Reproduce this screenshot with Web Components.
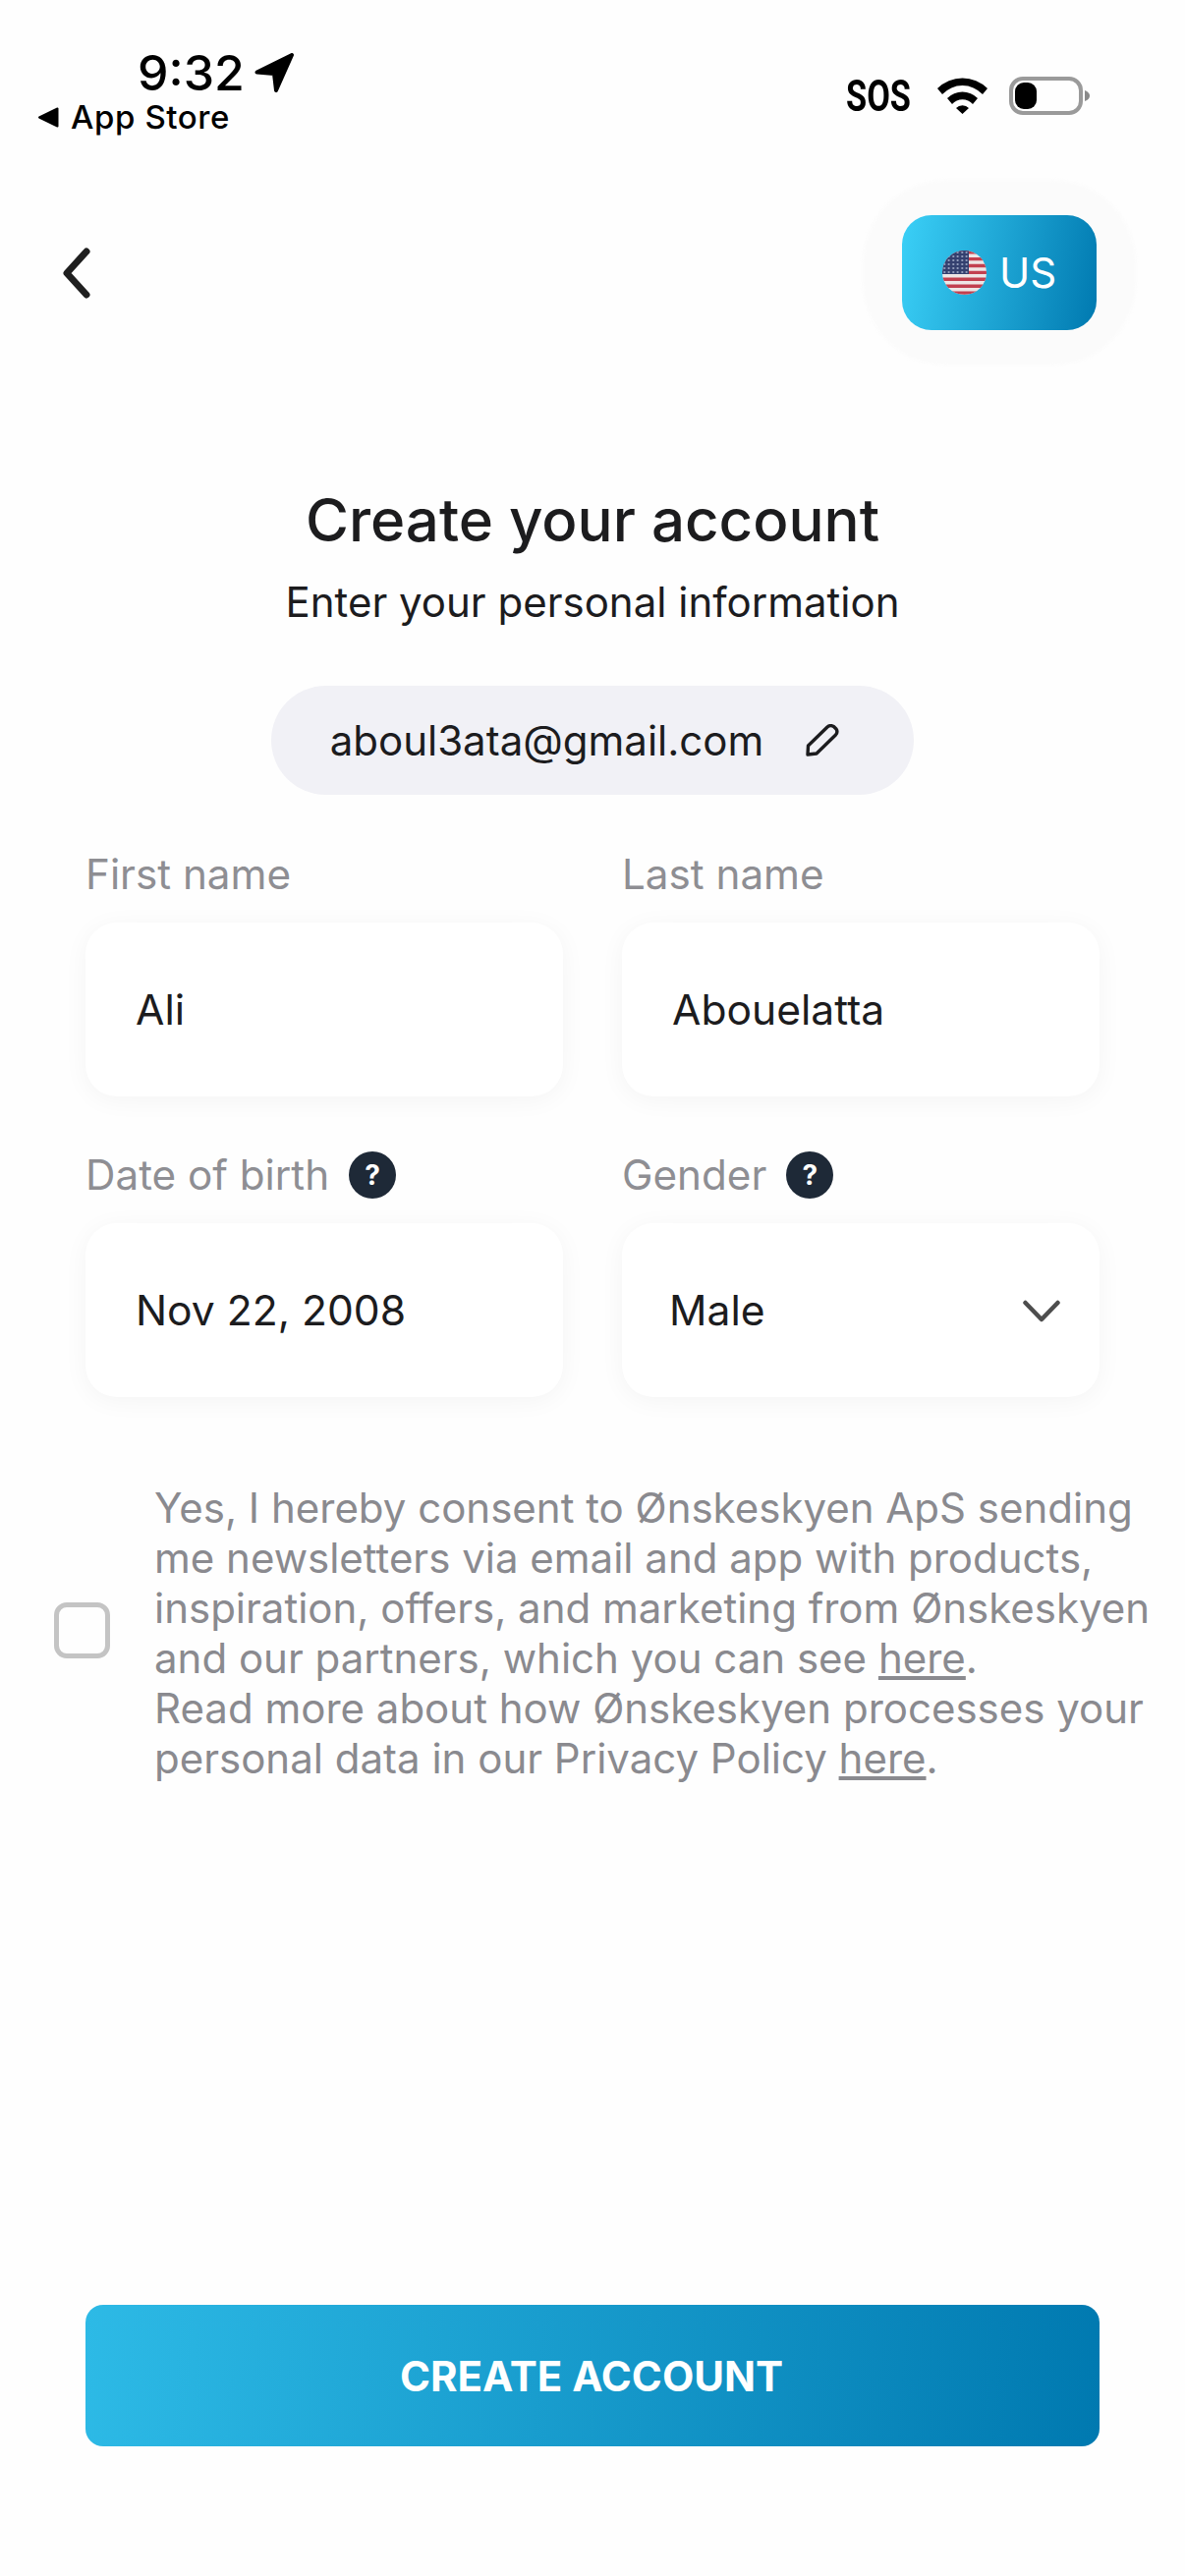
<!DOCTYPE html>
<html lang="en">
<head>
<meta charset="utf-8">
<title>Create your account</title>
<style>
  html, body { margin: 0; padding: 0; background: #fefefe; }
  body { font-family: Inter, "Liberation Sans", sans-serif; color: #1c1c1e; }
</style>
</head>
<body>
<account-screen>
  <status-bar time="9:32" back-label="App Store"></status-bar>
  <top-nav region="US"></top-nav>
  <form-heading title="Create your account" subtitle="Enter your personal information"></form-heading>
  <email-pill>aboul3ata@gmail.com</email-pill>
  <field-grid>
    <form-field label="First name">Ali</form-field>
    <form-field label="Last name">Abouelatta</form-field>
    <form-field label="Date of birth" help>Nov 22, 2008</form-field>
    <form-field label="Gender" help select>Male</form-field>
  </field-grid>
  <consent-row>
    Yes, I hereby consent to Ønskeskyen ApS sending<br>
    me newsletters via email and app with products,<br>
    inspiration, offers, and marketing from Ønskeskyen<br>
    and our partners, which you can see <u>here</u>.<br>
    Read more about how Ønskeskyen processes your<br>
    personal data in our Privacy Policy <u>here</u>.
  </consent-row>
  <primary-button>CREATE ACCOUNT</primary-button>
</account-screen>

<script>
class AccountScreen extends HTMLElement {
  constructor() {
    super();
    this.root = this.attachShadow({mode: 'open'});
    this.root.innerHTML = `
      <style>
        :host { display: flex; flex-direction: column; height: 2622px; box-sizing: border-box; padding-bottom: 132px; overflow: hidden; }
      </style>
      <slot></slot>`;
  }
}
customElements.define('account-screen', AccountScreen);

class StatusBar extends HTMLElement {
  constructor() {
    super();
    this.root = this.attachShadow({mode: 'open'});
    this.root.innerHTML = `
      <style>
        :host { display: flex; justify-content: space-between; height: 140px; box-sizing: border-box; padding: 48px 97px 0 38px; color: #000; }
        .left { display: flex; flex-direction: column; }
        .time { display: flex; align-items: center; gap: 10px; margin-left: 102px; height: 52px; font: 500 50px/52px Inter, sans-serif; }
        .back { display: flex; align-items: center; gap: 12px; height: 38px; font: 500 33px/38px Inter, sans-serif; letter-spacing: .6px; }
        .right { display: flex; align-items: flex-start; padding-top: 30px; }
        .sos { font: 700 44px/44px Roboto, sans-serif; width: 66px; margin: -2px 27px 0 0; display: inline-block; transform: scaleX(.78); transform-origin: left center; white-space: nowrap; }
        .wifi { margin-right: 22px; margin-top: 1px; }
        svg { display: block; }
      </style>
      <div class="left">
        <div class="time"><span class="clock"></span>
          <svg width="40" height="40" viewBox="0 0 40 40"><path d="M2.5 19.5 L38 2 L22 38 L20 21 Z" fill="#000" stroke="#000" stroke-width="4" stroke-linejoin="round"/></svg>
        </div>
        <div class="back">
          <svg width="22" height="21" viewBox="0 0 22 21"><path d="M2 10.5 L20.5 1.5 V19.5 Z" fill="#000" stroke="#000" stroke-width="2" stroke-linejoin="round"/></svg>
          <span class="label"></span>
        </div>
      </div>
      <div class="right">
        <span class="sos">SOS</span>
        <svg class="wifi" width="51" height="37" viewBox="0 0 51 37"><path d="M0 11 A36 36 0 0 1 51 11 L46 17 A28 28 0 0 0 5 17 Z M10 21 A22 22 0 0 1 41 21 L36 27 A14 14 0 0 0 15 27 Z M19 31 A9 9 0 0 1 32 31 L25.5 37 Z" fill="#000"/></svg>
        <svg width="82" height="39" viewBox="0 0 82 39">
          <rect x="2" y="2" width="71" height="35" rx="12" fill="none" stroke="#9a9a9a" stroke-width="4"/>
          <rect x="6" y="6" width="22" height="27" rx="9" fill="#000"/>
          <path d="M77 14 Q82 16 82 19.5 Q82 23 77 25 Z" fill="#8a8a8a"/>
        </svg>
      </div>`;
  }
  connectedCallback() {
    this.root.querySelector('.clock').textContent = this.getAttribute('time');
    this.root.querySelector('.label').textContent = this.getAttribute('back-label');
  }
}
customElements.define('status-bar', StatusBar);

class TopNav extends HTMLElement {
  constructor() {
    super();
    this.root = this.attachShadow({mode: 'open'});
    this.root.innerHTML = `
      <style>
        :host { display: flex; isolation: isolate; justify-content: space-between; align-items: center; margin-top: 79px; padding: 0 90px 0 62px; }
        .region { position: relative; display: flex; align-items: center; justify-content: center; gap: 13px; width: 198px; height: 117px; border-radius: 30px;
          background: linear-gradient(100deg, #3bd0f7 0%, #0079b0 100%); color: #fff; font: 400 42px/1 Inter, sans-serif; }
        .region::before { content: ""; position: absolute; inset: -36px -40px; border-radius: 85px; background: #fbfbfb; filter: blur(1.5px); z-index: -1; }
        svg { display: block; }
      </style>
      <svg width="30" height="52" viewBox="0 0 30 52"><path d="M26 4 L6 26 L26 48" fill="none" stroke="#1f1f1f" stroke-width="7" stroke-linecap="round" stroke-linejoin="round"/></svg>
      <div class="region">
        <svg width="45" height="45" viewBox="0 0 45 45">
          <defs>
            <clipPath id="disc"><circle cx="22.5" cy="22.5" r="22.5"/></clipPath>
            <pattern id="stars" width="4.5" height="4" patternUnits="userSpaceOnUse"><circle cx="2.2" cy="2" r="1" fill="#a9b3cf"/></pattern>
          </defs>
          <g clip-path="url(#disc)">
            <rect width="45" height="45" fill="#eee6e6"/>
            <path d="M0 1.7h45M0 8.6h45M0 15.5h45M0 22.4h45M0 29.3h45M0 36.2h45M0 43.1h45" stroke="#c2404f" stroke-width="3.4"/>
            <rect width="27" height="24" fill="#34406f"/>
            <rect width="27" height="24" fill="url(#stars)"/>
          </g>
        </svg>
        <span class="code"></span>
      </div>`;
  }
  connectedCallback() {
    this.root.querySelector('.code').textContent = this.getAttribute('region');
  }
}
customElements.define('top-nav', TopNav);

class FormHeading extends HTMLElement {
  constructor() {
    super();
    this.root = this.attachShadow({mode: 'open'});
    this.root.innerHTML = `
      <style>
        :host { display: block; margin-top: 158px; text-align: center; color: #1c1c1e; }
        h1 { margin: 0; font: 500 60px/70px Inter, sans-serif; }
        p { margin: 24px 0 0; font: 400 42px/50px Inter, sans-serif; }
      </style>
      <h1></h1>
      <p></p>`;
  }
  connectedCallback() {
    this.root.querySelector('h1').textContent = this.getAttribute('title');
    this.root.querySelector('p').textContent = this.getAttribute('subtitle');
  }
}
customElements.define('form-heading', FormHeading);

class EmailPill extends HTMLElement {
  constructor() {
    super();
    this.root = this.attachShadow({mode: 'open'});
    this.root.innerHTML = `
      <style>
        :host { display: flex; align-self: center; align-items: center; gap: 43px; height: 111px; box-sizing: border-box; margin-top: 60px; padding: 0 76px 0 60px;
          border-radius: 56px; background: #f1f1f6; font: 400 42px/1 Inter, sans-serif; color: #1c1c1e; }
        svg { display: block; }
      </style>
      <slot></slot>
      <svg width="34" height="33" viewBox="0 0 34 33"><path d="M2 31 L2.5 22 L22 3 Q25 .5 28.5 2.5 L31 5 Q33 8 30.5 11 L11 30 Z" fill="none" stroke="#1c1c1e" stroke-width="3.4" stroke-linejoin="round"/></svg>`;
  }
}
customElements.define('email-pill', EmailPill);

class FieldGrid extends HTMLElement {
  constructor() {
    super();
    this.root = this.attachShadow({mode: 'open'});
    this.root.innerHTML = `
      <style>
        :host { display: grid; grid-template-columns: 486px 486px; column-gap: 60px; row-gap: 56px; margin-top: 57px; padding-left: 87px; }
      </style>
      <slot></slot>`;
  }
}
customElements.define('field-grid', FieldGrid);

class FormField extends HTMLElement {
  constructor() {
    super();
    this.root = this.attachShadow({mode: 'open'});
    this.root.innerHTML = `
      <style>
        :host { display: block; }
        .label { display: flex; align-items: center; gap: 20px; height: 48px; font: 400 42.2px/48px Inter, sans-serif; color: #8e8e93; }
        .help { display: none; width: 48px; height: 48px; border-radius: 50%; background: #1e2937; color: #fff; font: 700 28px/48px Inter, sans-serif; text-align: center; }
        :host([help]) .help { display: block; }
        .box { display: flex; align-items: center; justify-content: space-between; height: 177px; box-sizing: border-box; margin-top: 25px; padding: 2px 40px 0 51px;
          border-radius: 32px; background: #fff; box-shadow: 0 4px 26px rgba(0,0,0,.045); font: 400 42.6px/1 Inter, sans-serif; color: #1c1c1e; }
        :host([select]) .box { padding-left: 48px; }
        .chev { display: none; }
        :host([select]) .chev { display: block; }
      </style>
      <div class="label"><span class="text"></span><span class="help">?</span></div>
      <div class="box">
        <span><slot></slot></span>
        <svg class="chev" width="38" height="23" viewBox="0 0 38 23"><path d="M2.5 3 L19 20 L35.5 3" fill="none" stroke="#4d4d4d" stroke-width="4.5" stroke-linecap="round" stroke-linejoin="round"/></svg>
      </div>`;
  }
  connectedCallback() {
    this.root.querySelector('.text').textContent = this.getAttribute('label');
  }
}
customElements.define('form-field', FormField);

class ConsentRow extends HTMLElement {
  constructor() {
    super();
    this.root = this.attachShadow({mode: 'open'});
    this.root.innerHTML = `
      <style>
        :host { display: flex; align-items: center; gap: 45px; margin-top: 87px; padding-left: 55px; font: 400 42px/51px Inter, sans-serif; color: #8a8a8f; white-space: nowrap; }
        .tick { flex: none; width: 57px; height: 57px; box-sizing: border-box; border: 5.5px solid #c4c4c4; border-radius: 13px; margin-top: -5px; }
      </style>
      <div class="tick"></div>
      <div><slot></slot></div>`;
  }
}
customElements.define('consent-row', ConsentRow);

class PrimaryButton extends HTMLElement {
  constructor() {
    super();
    this.root = this.attachShadow({mode: 'open'});
    this.root.innerHTML = `
      <style>
        :host { display: flex; align-items: center; justify-content: center; height: 144px; box-sizing: border-box; padding: 2px 2px 0 0; margin: auto 87px 0 87px; border-radius: 18px;
          background: linear-gradient(95deg, #2dbae6 0%, #0079b0 100%); color: #fff; font: 700 42px/1 Inter, sans-serif; }
      </style>
      <slot></slot>`;
  }
}
customElements.define('primary-button', PrimaryButton);
</script>
</body>
</html>
